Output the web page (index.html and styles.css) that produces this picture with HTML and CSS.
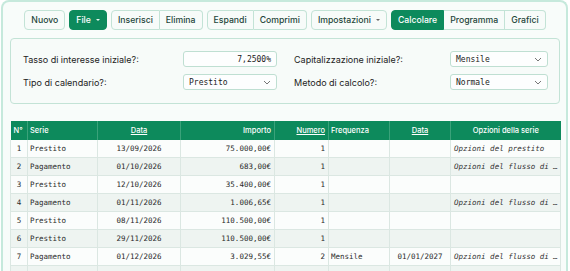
FILE: index.html
```html
<!DOCTYPE html>
<html lang="it">
<head>
<meta charset="utf-8">
<title>Calcolatore</title>
<link rel="stylesheet" href="styles.css">
</head>
<body>
<div class="app">
  <div class="toolbar">
    <div class="group"><button class="btn">Nuovo</button></div>
    <div class="group"><button class="btn primary">File <span class="caret light"></span></button></div>
    <div class="group"><button class="btn">Inserisci</button><button class="btn">Elimina</button></div>
    <div class="group"><button class="btn">Espandi</button><button class="btn">Comprimi</button></div>
    <div class="group"><button class="btn">Impostazioni <span class="caret"></span></button></div>
    <div class="group"><button class="btn primary">Calcolare</button><button class="btn">Programma</button><button class="btn">Grafici</button></div>
  </div>

  <div class="panel">
    <div class="label">Tasso di interesse iniziale?:</div>
    <div class="field num">7,2500%</div>
    <div class="label right">Capitalizzazione iniziale?:</div>
    <div class="field sel"><span>Mensile</span><svg class="chev" viewBox="0 0 8 5" width="8" height="5"><path d="M1 1l3 3 3-3" fill="none" stroke="#777" stroke-width="1"/></svg></div>
    <div class="label">Tipo di calendario?:</div>
    <div class="field sel"><span>Prestito</span><svg class="chev" viewBox="0 0 8 5" width="8" height="5"><path d="M1 1l3 3 3-3" fill="none" stroke="#777" stroke-width="1"/></svg></div>
    <div class="label right">Metodo di calcolo?:</div>
    <div class="field sel"><span>Normale</span><svg class="chev" viewBox="0 0 8 5" width="8" height="5"><path d="M1 1l3 3 3-3" fill="none" stroke="#777" stroke-width="1"/></svg></div>
  </div>

  <table class="grid">
    <colgroup>
      <col style="width:17px"><col style="width:70px"><col style="width:83px"><col style="width:94px">
      <col style="width:54px"><col style="width:61px"><col style="width:61px"><col style="width:110px">
    </colgroup>
    <thead>
      <tr>
        <th class="l">N°</th>
        <th class="l">Serie</th>
        <th class="c"><span class="u">Data</span></th>
        <th class="r">Importo</th>
        <th class="r"><span class="u">Numero</span></th>
        <th class="l">Frequenza</th>
        <th class="c"><span class="u">Data</span></th>
        <th class="c">Opzioni della serie</th>
      </tr>
    </thead>
    <tbody>
      <tr><td class="n">1</td><td>Prestito</td><td class="c">13/09/2026</td><td class="r">75.000,00€</td><td class="r">1</td><td></td><td></td><td class="opt">Opzioni del prestito</td></tr>
      <tr><td class="n">2</td><td>Pagamento</td><td class="c">01/10/2026</td><td class="r">683,00€</td><td class="r">1</td><td></td><td></td><td class="opt">Opzioni del flusso di …</td></tr>
      <tr><td class="n">3</td><td>Prestito</td><td class="c">12/10/2026</td><td class="r">35.400,00€</td><td class="r">1</td><td></td><td></td><td class="opt"></td></tr>
      <tr><td class="n">4</td><td>Pagamento</td><td class="c">01/11/2026</td><td class="r">1.006,65€</td><td class="r">1</td><td></td><td></td><td class="opt">Opzioni del flusso di …</td></tr>
      <tr><td class="n">5</td><td>Prestito</td><td class="c">08/11/2026</td><td class="r">110.500,00€</td><td class="r">1</td><td></td><td></td><td class="opt"></td></tr>
      <tr><td class="n">6</td><td>Prestito</td><td class="c">29/11/2026</td><td class="r">110.500,00€</td><td class="r">1</td><td></td><td></td><td class="opt"></td></tr>
      <tr><td class="n">7</td><td>Pagamento</td><td class="c">01/12/2026</td><td class="r">3.029,55€</td><td class="r">2</td><td>Mensile</td><td class="c">01/01/2027</td><td class="opt">Opzioni del flusso di …</td></tr>
      <tr class="last"><td class="n"></td><td></td><td class="c"></td><td class="r"></td><td class="r"></td><td></td><td></td><td class="opt"></td></tr>
    </tbody>
  </table>
</div>
</body>
</html>
```

FILE: styles.css
```css
html, body {
  margin: 0;
  padding: 0;
  background: #ffffff;
  height: 271px;
  overflow: hidden;
}
body {
  font-family: Inter, "Noto Sans", "Liberation Sans", sans-serif;
  color: #222;
}
.app {
  margin: 0 2px 0 1px;
  height: 300px;
  border: 2px solid #c6e9dc;
  border-bottom: none;
  border-radius: 8px 8px 0 0;
  background: #f8fcfa;
  padding: 8px 6px 0 7px;
  box-sizing: border-box;
}
.toolbar {
  display: flex;
  justify-content: center;
  gap: 4px;
  height: 20px;
}
.group {
  display: flex;
}
.btn {
  font-family: Inter, "Noto Sans", sans-serif;
  font-size: 8.7px;
  font-weight: 500;
  color: #24463a;
  background: #f7fbf9;
  border: 1px solid #c3e3d6;
  height: 20px;
  padding: 0 6px;
  margin: 0;
  display: flex;
  align-items: center;
  gap: 5px;
  border-radius: 0;
}
.group .btn + .btn {
  border-left: none;
}
.group .btn:first-child {
  border-top-left-radius: 4px;
  border-bottom-left-radius: 4px;
}
.group .btn:last-child {
  border-top-right-radius: 4px;
  border-bottom-right-radius: 4px;
}
.btn.primary {
  background: #0d8a5c;
  border-color: #0d8a5c;
  color: #ffffff;
}
.caret {
  width: 0;
  height: 0;
  border-left: 2px solid transparent;
  border-right: 2px solid transparent;
  border-top: 2px solid #666;
}
.caret.light {
  border-top-color: #e8f6ef;
}

.panel {
  margin-top: 8px;
  border: 1px solid #c3e3d6;
  border-radius: 4px;
  background: #f7fbf9;
  padding: 12px 11px 13px 12px;
  display: grid;
  grid-template-columns: 160px 94px 1fr 98px;
  row-gap: 7px;
  align-items: center;
}
.label {
  font-size: 9px;
  color: #222;
}
.label.right {
  padding-left: 17px;
}
.field {
  height: 16px;
  box-sizing: border-box;
  border: 1px solid #bfdfd2;
  border-radius: 3px;
  background: #fdfefe;
  font-family: "DejaVu Sans Mono", "Liberation Mono", monospace;
  font-size: 8px;
  color: #222;
  display: flex;
  align-items: center;
  padding: 0 5px;
}
.field.num {
  justify-content: flex-end;
}
.field.sel {
  justify-content: space-between;
}
.chev {
  display: block;
}

.grid {
  margin-top: 17px;
  width: 550px;
  table-layout: fixed;
  border-collapse: collapse;
  font-size: 7.5px;
}
.grid th {
  background: #0d8a5c;
  color: #ffffff;
  font-weight: 500;
  font-size: 7.5px;
  height: 19px;
  padding: 0 2px;
  border-left: 1px solid #3aa27a;
  white-space: nowrap;
  overflow: hidden;
}
.grid th:first-child {
  border-left: none;
  padding-left: 3px;
}
.grid th.l { text-align: left; }
.grid th.c { text-align: center; }
.grid th.r { text-align: right; padding-right: 3px; }
.u { text-decoration: underline; }
.grid td {
  height: 17px;
  padding: 0 2px;
  font-family: "DejaVu Sans Mono", "Liberation Mono", monospace;
  color: #2a2a2a;
  border: 1px solid #dbe7e2;
  border-top: none;
  white-space: nowrap;
  overflow: hidden;
}
.grid tbody tr:nth-child(odd) td { background: #fbfdfc; }
.grid tbody tr:nth-child(even) td { background: #eef4f1; }
.grid td.n { text-align: center; }
.grid td.c { text-align: center; }
.grid td.r { text-align: right; padding-right: 3px; }
.grid td.opt {
  font-style: italic;
  color: #333;
  padding-left: 3px;
}
```
